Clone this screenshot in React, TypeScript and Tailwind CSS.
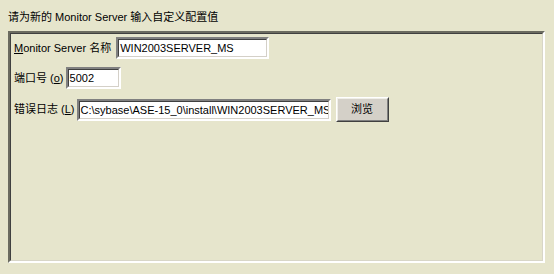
import React from "react";

const font = { fontFamily: '"Liberation Sans", Tahoma, "Noto Sans CJK SC", sans-serif' };

function Field({ width, text }: { width: string; text: string }) {
  return (
    <div
      className={`h-[22px] ${width} border-2 border-t-[#808080] border-l-[#808080] border-b-[#ffffff] border-r-[#ffffff] shrink-0`}
    >
      <div className="h-full w-full border border-t-[#404040] border-l-[#404040] border-b-[#d4d0c8] border-r-[#d4d0c8] bg-white overflow-hidden whitespace-nowrap pl-[1px] text-[11px] leading-[16px] text-black">
        {text}
      </div>
    </div>
  );
}

export default function App() {
  return (
    <div className="w-[554px] h-[274px] bg-[#e6e5cc] text-black text-[11px]" style={font}>
      <div className="h-[31px] pl-[8px] pt-[10px] leading-[14px]">请为新的 Monitor Server 输入自定义配置值</div>
      <div className="ml-[8px] w-[537px] h-[232px] border-2 border-t-[#6b6b60] border-l-[#6b6b60] border-b-[#ffffff] border-r-[#ffffff]">
        <div className="h-full w-full border border-t-[#404040] border-l-[#404040] border-b-[#d8d6c8] border-r-[#d8d6c8] pl-[3px] pt-[3px] flex flex-col gap-[8px]">
          <div className="flex items-center gap-[5px]">
            <span>
              <span className="underline">M</span>onitor Server 名称
            </span>
            <Field width="w-[153px]" text="WIN2003SERVER_MS" />
          </div>
          <div className="flex items-center gap-[2px]">
            <span>
              端口号 (<span className="underline">o</span>)
            </span>
            <Field width="w-[55px]" text="5002" />
          </div>
          <div className="flex items-center gap-[2px]">
            <span>
              错误日志 (<span className="underline">L</span>)
            </span>
            <Field width="w-[254px]" text="C:\sybase\ASE-15_0\install\WIN2003SERVER_MS" />
            <div className="ml-[3px] h-[25px] w-[53px] border border-t-[#ffffff] border-l-[#ffffff] border-b-[#404040] border-r-[#404040] bg-[#d4d0c8]">
              <div className="h-full w-full border border-t-[#f0efe8] border-l-[#f0efe8] border-b-[#808080] border-r-[#808080] flex items-center justify-center">
                浏览
              </div>
            </div>
          </div>
        </div>
      </div>
    </div>
  );
}
